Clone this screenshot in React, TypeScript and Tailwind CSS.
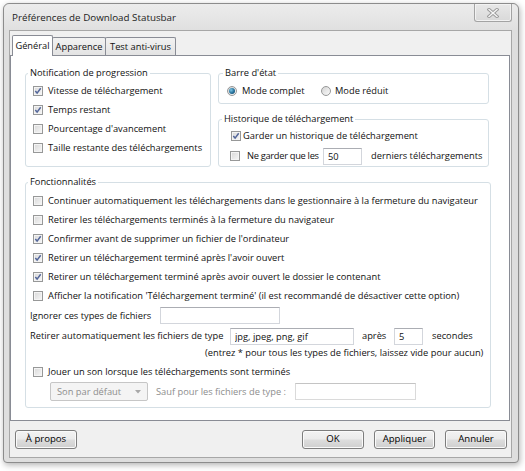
import clsx from 'clsx';

interface BoxProps {
  on?: boolean;
  className?: string;
}

const CheckBox = ({ on, className }: BoxProps) => (
  <span
    className={clsx(
      'inline-flex w-[10px] h-[10px] shrink-0 items-center justify-center border border-[#979898] bg-[linear-gradient(135deg,#d8d8d8,#f7f7f7)] shadow-[inset_0_0_0_1px_#f4f4f4]',
      className
    )}
  >
    {on && (
      <svg viewBox="0 0 8 8" className="w-[8px] h-[8px]">
        <path d="M1.3 4.1 L3.1 6.1 L6.7 1.3" fill="none" stroke="#53669a" strokeWidth="1.5" />
      </svg>
    )}
  </span>
);

const Radio = ({ on, className }: BoxProps) => (
  <span
    className={clsx(
      'inline-flex w-[10px] h-[10px] shrink-0 items-center justify-center rounded-full border border-[#979898] bg-[linear-gradient(135deg,#d4d4d4,#fafafa)]',
      className
    )}
  >
    {on && (
      <span className="w-[6px] h-[6px] rounded-full bg-[radial-gradient(circle_at_35%_35%,#7cc6e6,#246f99_55%,#123f5e)]" />
    )}
  </span>
);

const TextBox = ({ value = '', className }: { value?: string; className?: string }) => (
  <input
    readOnly
    defaultValue={value}
    className={clsx(
      'h-[17px] px-[4px] bg-white border border-[#d3d6dc] border-t-[#abadb3] outline-none text-[9.3px] text-[#111]',
      className
    )}
  />
);

const Button = ({ label, className }: { label: string; className?: string }) => (
  <button
    className={clsx(
      'h-[19px] rounded-[3px] border border-[#7d7d7d] text-[9.6px] text-black shadow-[inset_0_0_0_1px_#fafafa]',
      'bg-[linear-gradient(#f3f3f3_0%,#ebebeb_48%,#dddddd_52%,#cfcfcf_100%)]',
      className
    )}
  >
    {label}
  </button>
);

const CheckRow = ({ on, label }: { on?: boolean; label: string }) => (
  <div className="h-[19px] flex items-center pl-[3px]">
    <CheckBox on={on} />
    <span className="ml-[5px] whitespace-nowrap">{label}</span>
  </div>
);

const progression = [
  { label: 'Vitesse de téléchargement', on: true },
  { label: 'Temps restant', on: true },
  { label: "Pourcentage d'avancement", on: false },
  { label: 'Taille restante des téléchargements', on: false },
];

const options = [
  { label: 'Continuer automatiquement les téléchargements dans le gestionnaire à la fermeture du navigateur', on: false },
  { label: 'Retirer les téléchargements terminés à la fermeture du navigateur', on: false },
  { label: "Confirmer avant de supprimer un fichier de l'ordinateur", on: true },
  { label: "Retirer un téléchargement terminé après l'avoir ouvert", on: true },
  { label: 'Retirer un téléchargement terminé après avoir ouvert le dossier le contenant', on: true },
  { label: "Afficher la notification 'Téléchargement terminé' (il est recommandé de désactiver cette option)", on: false },
];

const tabs = [
  { label: 'Général', w: 'w-[41px]' },
  { label: 'Apparence', w: 'w-[54px]' },
  { label: 'Test anti-virus', w: 'w-[71px]' },
];

const groupBox = 'border border-[#d5dfe5] rounded-[3px] m-0 min-w-0';
const legend = 'px-[2px] leading-[12px] text-[#111]';

export default function App() {
  return (
    <div className="w-[525px] h-[471px] bg-white pt-[3px] pl-[3px] font-['Open_Sans','Noto_Sans',sans-serif] text-[9.3px] text-[#111]">
      <div className="w-[516px] h-[460px] flex flex-col rounded-t-[6px] rounded-b-[4px] border border-[#8c8c8c] bg-[#dedede] shadow-[1px_2px_6px_rgba(0,0,0,0.3)]">
        {/* title bar */}
        <div className="h-[26px] flex justify-between items-start rounded-t-[6px] bg-[linear-gradient(#ececec,#e0e0e0)]">
          <span className="pl-[8px] pt-[8px] text-[9.8px] leading-[12px] text-[#1c1c1c]">Préférences de Download Statusbar</span>
          <div className="mr-[6px] w-[38px] h-[18px] flex items-center justify-center rounded-b-[3px] border border-t-0 border-[#a3a3a3] bg-[linear-gradient(#e8e8e8,#d9d9d9)] shadow-[inset_0_0_0_1px_#f2f2f2]">
            <svg viewBox="0 0 12 10" className="w-[12px] h-[10px] mt-[1px]">
              <path d="M2 1.5 L10 8.5 M10 1.5 L2 8.5" stroke="#9a9a9a" strokeWidth="3.2" strokeLinecap="square" />
              <path d="M2 1.5 L10 8.5 M10 1.5 L2 8.5" stroke="#f6f6f6" strokeWidth="1.4" strokeLinecap="square" />
            </svg>
          </div>
        </div>

        {/* client area */}
        <div className="h-[428px] ml-[5px] mr-[6px] flex flex-col border border-[#a7a7a7] bg-[#f0f0f0]">
          <div className="flex items-end h-[20px] mt-[5px] ml-[2px] -mb-[1px]">
            {tabs.map((t, i) =>
              i === 0 ? (
                <div
                  key={t.label}
                  className={clsx(t.w, 'relative z-10 h-[21px] flex items-center justify-center border border-b-0 border-[#898c95] bg-white rounded-t-[2px]')}
                >
                  {t.label}
                </div>
              ) : (
                <div
                  key={t.label}
                  className={clsx(t.w, '-ml-[1px] h-[18px] mb-[1px] flex items-center justify-center border border-b-0 border-[#898c95] rounded-t-[2px] bg-[linear-gradient(#f2f2f2,#e3e3e3)]')}
                >
                  {t.label}
                </div>
              )
            )}
          </div>

          {/* tab panel */}
          <div className="h-[366px] mr-[1px] border border-[#898c95] bg-white pt-[11px] pl-[14px]">
            <div className="grid grid-cols-[186px_273px] gap-x-[7px]">
              <fieldset className={clsx(groupBox, 'pl-[4px] pt-[2px]')}>
                <legend className={clsx(legend, '-ml-[2px]')}>Notification de progression</legend>
                {progression.map((p) => (
                  <CheckRow key={p.label} on={p.on} label={p.label} />
                ))}
              </fieldset>

              <div className="flex flex-col w-[271px]">
                <fieldset className={clsx(groupBox, 'pl-[8px] pt-[2px] pb-[3px]')}>
                  <legend className={clsx(legend, '-ml-[4px]')}>Barre d'état</legend>
                  <div className="h-[19px] flex items-center">
                    <Radio on />
                    <span className="ml-[5px] w-[79px]">Mode complet</span>
                    <Radio />
                    <span className="ml-[4px]">Mode réduit</span>
                  </div>
                </fieldset>

                <fieldset className={clsx(groupBox, 'mt-[9px] pl-[8px] pt-[1px]')}>
                  <legend className={clsx(legend, '-ml-[5px]')}>Historique de téléchargement</legend>
                  <div className="h-[20px] flex items-center pl-[4px]">
                    <CheckBox on />
                    <span className="ml-[2px]">Garder un historique de téléchargement</span>
                  </div>
                  <div className="h-[20px] flex items-center pl-[3px]">
                    <CheckBox />
                    <span className="ml-[7px] w-[76px] whitespace-nowrap tracking-[-0.3px]">Ne garder que les</span>
                    <TextBox value="50" className="w-[39px]" />
                    <span className="ml-[9px] whitespace-nowrap">derniers téléchargements</span>
                  </div>
                </fieldset>
              </div>

              <fieldset className={clsx(groupBox, 'col-span-2 mt-[9px] w-[466px] pl-[4px] pt-[3px] pb-[5px]')}>
                <legend className={clsx(legend, '-ml-[2px]')}>Fonctionnalités</legend>
                {options.map((o) => (
                  <CheckRow key={o.label} on={o.on} label={o.label} />
                ))}

                <div className="h-[21px] flex items-center">
                  <span className="w-[130px]">Ignorer ces types de fichiers</span>
                  <TextBox className="w-[120px]" />
                </div>

                <div className="h-[20px] flex items-center">
                  <span className="w-[200px] whitespace-nowrap">Retirer automatiquement les fichiers de type</span>
                  <TextBox value="jpg, jpeg, png, gif" className="w-[124px]" />
                  <span className="ml-[8px] w-[32px]">après</span>
                  <TextBox value="5" className="w-[29px]" />
                  <span className="ml-[9px]">secondes</span>
                </div>

                <div className="h-[14px] flex items-center pl-[175px] whitespace-nowrap">
                  (entrez * pour tous les types de fichiers, laissez vide pour aucun)
                </div>

                <div className="mt-[2px]">
                  <CheckRow label="Jouer un son lorsque les téléchargements sont terminés" />
                </div>

                <div className="h-[21px] flex items-center text-[#8d8d8d]">
                  <div className="ml-[20px] w-[98px] h-[19px] flex items-center justify-between px-[6px] rounded-[2px] border border-[#c6c6c6] bg-[#f4f4f4]">
                    <span>Son par défaut</span>
                    <svg viewBox="0 0 6 4" className="w-[6px] h-[4px]">
                      <path d="M0 0 L6 0 L3 3.5 Z" fill="#a8a8a8" />
                    </svg>
                  </div>
                  <span className="ml-[8px] w-[139px] whitespace-nowrap">Sauf pour les fichiers de type :</span>
                  <TextBox className="w-[121px] border-[#dadada] border-t-[#c4c4c4]" />
                </div>
              </fieldset>
            </div>
          </div>

          {/* dialog buttons */}
          <div className="flex mt-[9px] pl-[5px] pr-[4px]">
            <Button label="À propos" className="w-[62px]" />
            <div className="flex-1" />
            <Button label="OK" className="w-[62px]" />
            <Button label="Appliquer" className="w-[61px] ml-[10px]" />
            <Button label="Annuler" className="w-[62px] ml-[10px]" />
          </div>
        </div>
      </div>
    </div>
  );
}
